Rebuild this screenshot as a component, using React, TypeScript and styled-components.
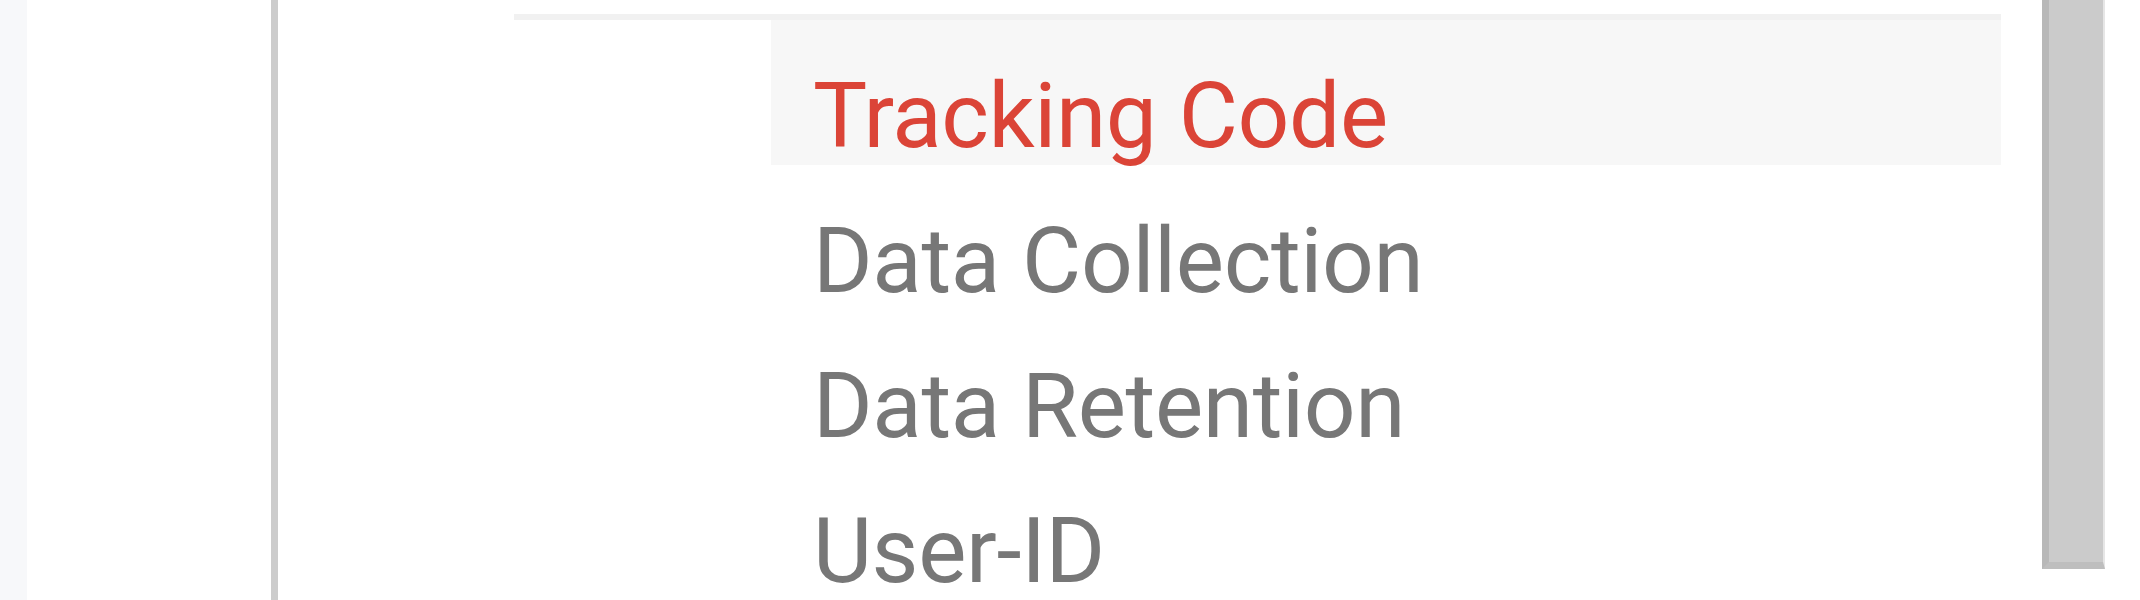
import React from 'react';
import styled, { createGlobalStyle } from 'styled-components';

const GlobalStyle = createGlobalStyle`
  html, body {
    margin: 0;
    padding: 0;
    height: 100%;
    background: #fff;
    overflow: hidden;
  }
  #root {
    height: 100%;
  }
`;

const Page = styled.div`
  display: flex;
  width: 2140px;
  height: 600px;
  background: #fff;
  font-family: Roboto, 'Liberation Sans', sans-serif;
`;

const Rail = styled.div`
  width: 27px;
  flex-shrink: 0;
  background: #f7f8fa;
`;

const Spacer = styled.div<{ $w: number }>`
  width: ${(p) => p.$w}px;
  flex-shrink: 0;
`;

const Rule = styled.div`
  width: 7px;
  flex-shrink: 0;
  background: #cccccc;
`;

const Panel = styled.div`
  width: 1487px;
  flex-shrink: 0;
  padding-top: 14px;
  display: flex;
  flex-direction: column;
`;

const TopStrip = styled.div`
  height: 7px;
  background: #f1f1f1;
`;

const NavList = styled.ul`
  list-style: none;
  margin: 0 0 0 257px;
  padding: 0;
`;

const NavItem = styled.li<{ $active?: boolean }>`
  height: 145px;
  box-sizing: border-box;
  padding: 47px 0 0 42px;
  font-size: 91px;
  line-height: 98px;
  letter-spacing: -0.4px;
  white-space: nowrap;
  color: ${(p) => (p.$active ? '#db4437' : '#777777')};
  background: ${(p) => (p.$active ? '#f7f7f7' : 'transparent')};
`;

const ScrollTrack = styled.div`
  width: 63px;
  flex-shrink: 0;
  align-self: flex-start;
`;

const ScrollThumb = styled.div`
  height: 569px;
  box-sizing: border-box;
  background: #cbcbcb;
  border-left: 7px solid #b8b8b8;
  border-bottom: 7px solid #bebebe;
  border-right: 2px solid #e6e6e6;
`;

const items = ['Tracking Code', 'Data Collection', 'Data Retention', 'User-ID'];

const App: React.FC = () => {
  return (
    <>
      <GlobalStyle />
      <Page>
        <Rail />
        <Spacer $w={244} />
        <Rule />
        <Spacer $w={236} />
        <Panel>
          <TopStrip />
          <NavList>
            {items.map((label, i) => (
              <NavItem key={label} $active={i === 0}>
                {label}
              </NavItem>
            ))}
          </NavList>
        </Panel>
        <Spacer $w={41} />
        <ScrollTrack>
          <ScrollThumb />
        </ScrollTrack>
      </Page>
    </>
  );
};

export default App;
